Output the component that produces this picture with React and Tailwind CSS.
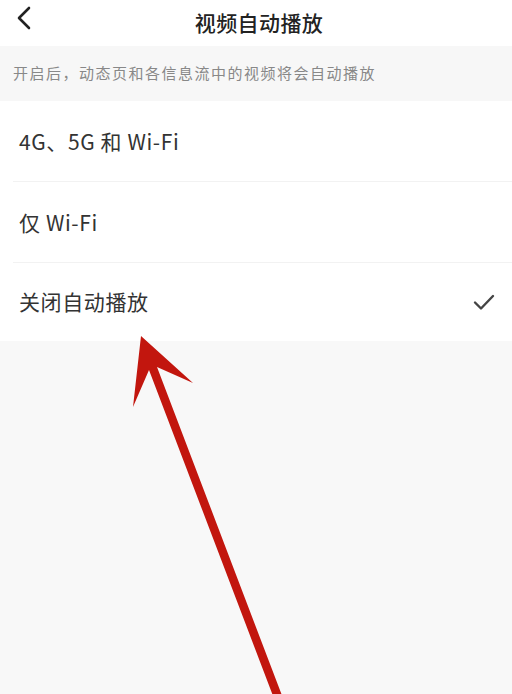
import React from "react";

const font = { fontFamily: '"Noto Sans CJK SC", "Noto Sans", sans-serif' };

function Row({ label, checked, divider, h }) {
  return (
    <div className={`relative flex ${h} items-center justify-between bg-white pl-[19px] pr-[17px]`}>
      <span className="text-[21px] tracking-[0.6px] text-[#333333]">{label}</span>
      {checked && (
        <svg width="22" height="18" viewBox="0 0 22 18" fill="none">
          <path d="M2 9.5 L8 15.5 L20 3" stroke="#444" strokeWidth="2.4" strokeLinecap="round" strokeLinejoin="round" />
        </svg>
      )}
      {divider && <div className="absolute bottom-0 left-[13px] right-0 h-px bg-[#f2f2f2]" />}
    </div>
  );
}

export default function App() {
  return (
    <div className="relative h-[694px] w-[512px] overflow-hidden bg-[#f8f8f8]" style={font}>
      <div className="relative flex h-[46px] items-center justify-center bg-white">
        <svg className="absolute left-[16px] top-[6px]" width="16" height="24" viewBox="0 0 16 24" fill="none">
          <path d="M13 2 L3 12 L13 22" stroke="#222" strokeWidth="2.6" strokeLinecap="round" strokeLinejoin="round" />
        </svg>
        <span className="ml-[6px] text-[21px] font-medium tracking-[0.4px] text-[#222]">视频自动播放</span>
      </div>
      <div className="flex h-[55px] items-center bg-[#f7f7f7] pl-[13px]">
        <span className="text-[15px] tracking-[1.5px] text-[#888]">开启后，动态页和各信息流中的视频将会自动播放</span>
      </div>
      <Row label="4G、5G 和 Wi-Fi" h="h-[81px]" divider />
      <Row label="仅 Wi-Fi" h="h-[81px]" divider />
      <Row label="关闭自动播放" h="h-[78px]" checked />
      <svg className="pointer-events-none absolute left-0 top-0" width="512" height="694" viewBox="0 0 512 694">
        <polygon
          points="141,336 193,383 157,367 286,706 278,709 149,370 133,407"
          fill="#c2160e"
        />
      </svg>
    </div>
  );
}
